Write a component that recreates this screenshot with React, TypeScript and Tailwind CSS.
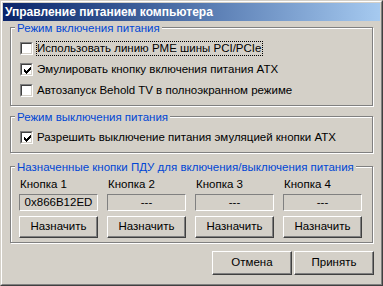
import React from "react";

const FONT = { fontFamily: '"Liberation Sans", Arial, sans-serif' };

function Check() {
  return (
    <svg width="7" height="7" viewBox="0 0 7 7" className="absolute left-[2px] top-[2px]" shapeRendering="crispEdges">
      <rect x="0" y="2" width="1" height="3" fill="#000" />
      <rect x="1" y="3" width="1" height="3" fill="#000" />
      <rect x="2" y="4" width="1" height="3" fill="#000" />
      <rect x="3" y="3" width="1" height="3" fill="#000" />
      <rect x="4" y="2" width="1" height="3" fill="#000" />
      <rect x="5" y="1" width="1" height="3" fill="#000" />
      <rect x="6" y="0" width="1" height="3" fill="#000" />
    </svg>
  );
}

function CheckBox({ checked }: { checked?: boolean }) {
  return (
    <div className="w-[13px] h-[13px] shrink-0 border border-t-[#808080] border-l-[#808080] border-r-white border-b-white">
      <div className="relative w-[11px] h-[11px] bg-white border border-t-[#404040] border-l-[#404040] border-r-[#D4D0C8] border-b-[#D4D0C8]">
        {checked && <Check />}
      </div>
    </div>
  );
}

function Row({ label, checked, focus }: { label: string; checked?: boolean; focus?: boolean }) {
  return (
    <div className="h-[21px] flex items-center pl-[9px]">
      <CheckBox checked={checked} />
      <span
        className={
          "ml-[3px] h-[15px] leading-[13px] pr-[1px] border whitespace-nowrap " +
          (focus ? "border-dotted border-black" : "border-transparent")
        }
      >
        {label}
      </span>
    </div>
  );
}

function Group({ title, className, children }: { title: string; className: string; children: React.ReactNode }) {
  return (
    <div
      className={
        "relative border border-[#808080] shadow-[inset_1px_1px_0_#ffffff,1px_1px_0_#ffffff] " + className
      }
    >
      <span className="absolute left-[4px] top-[-6px] px-[2px] bg-[#D4D0C8] text-[#0046D5] leading-[13px] whitespace-nowrap">
        {title}
      </span>
      {children}
    </div>
  );
}

function Btn({ label, className }: { label: string; className: string }) {
  return (
    <div
      className={
        "flex items-center justify-center border border-t-white border-l-white border-r-[#404040] border-b-[#404040] shadow-[inset_-1px_-1px_0_#808080] " +
        className
      }
    >
      {label}
    </div>
  );
}

export default function App() {
  const cols = [
    { n: "Кнопка 1", v: "0x866B12ED" },
    { n: "Кнопка 2", v: "---" },
    { n: "Кнопка 3", v: "---" },
    { n: "Кнопка 4", v: "---" },
  ];
  return (
    <div
      className="w-[383px] h-[286px] bg-[#D4D0C8] text-black text-[11.5px] border border-t-[#D4D0C8] border-l-[#D4D0C8] border-r-[#404040] border-b-[#404040]"
      style={FONT}
    >
      <div className="h-full border border-t-white border-l-white border-r-[#808080] border-b-[#808080] p-[1px] flex flex-col">
        <div className="h-[18px] bg-linear-to-r from-[#0A246A] to-[#A6CAF0] flex items-center pl-[2px] text-white font-bold text-[12px] whitespace-nowrap">
          Управление питанием компьютера
        </div>
        <div className="px-[7px] flex flex-col">
          <Group title="Режим включения питания" className="mt-[6px] h-[79px] pt-[10px]">
            <Row label="Использовать линию PME шины PCI/PCIe" focus />
            <Row label="Эмулировать кнопку включения питания ATX" checked />
            <Row label="Автозапуск Behold TV в полноэкранном режиме" />
          </Group>
          <Group title="Режим выключения питания" className="mt-[10px] h-[37px] pt-[10px]">
            <Row label="Разрешить выключение питания эмуляцией кнопки ATX" checked />
          </Group>
          <Group
            title="Назначенные кнопки ПДУ для включения/выключения питания"
            className="mt-[13px] h-[77px] pt-[11px] pl-[8px]"
          >
            <div className="grid grid-cols-[79px_79px_79px_79px] gap-x-[9px]">
              {cols.map((c) => (
                <div key={c.n} className="flex flex-col">
                  <div className="leading-[13px] pl-[1px]">{c.n}</div>
                  <div className="mt-[3px] h-[17px] flex items-center justify-center border border-t-[#808080] border-l-[#808080] border-r-white border-b-white">
                    {c.v}
                  </div>
                  <Btn label="Назначить" className="mt-[5px] h-[22px]" />
                </div>
              ))}
            </div>
          </Group>
          <div className="mt-[8px] flex justify-end gap-[2px] mr-[-1px]">
            <Btn label="Отмена" className="w-[80px] h-[24px]" />
            <Btn label="Принять" className="w-[80px] h-[24px]" />
          </div>
        </div>
      </div>
    </div>
  );
}
